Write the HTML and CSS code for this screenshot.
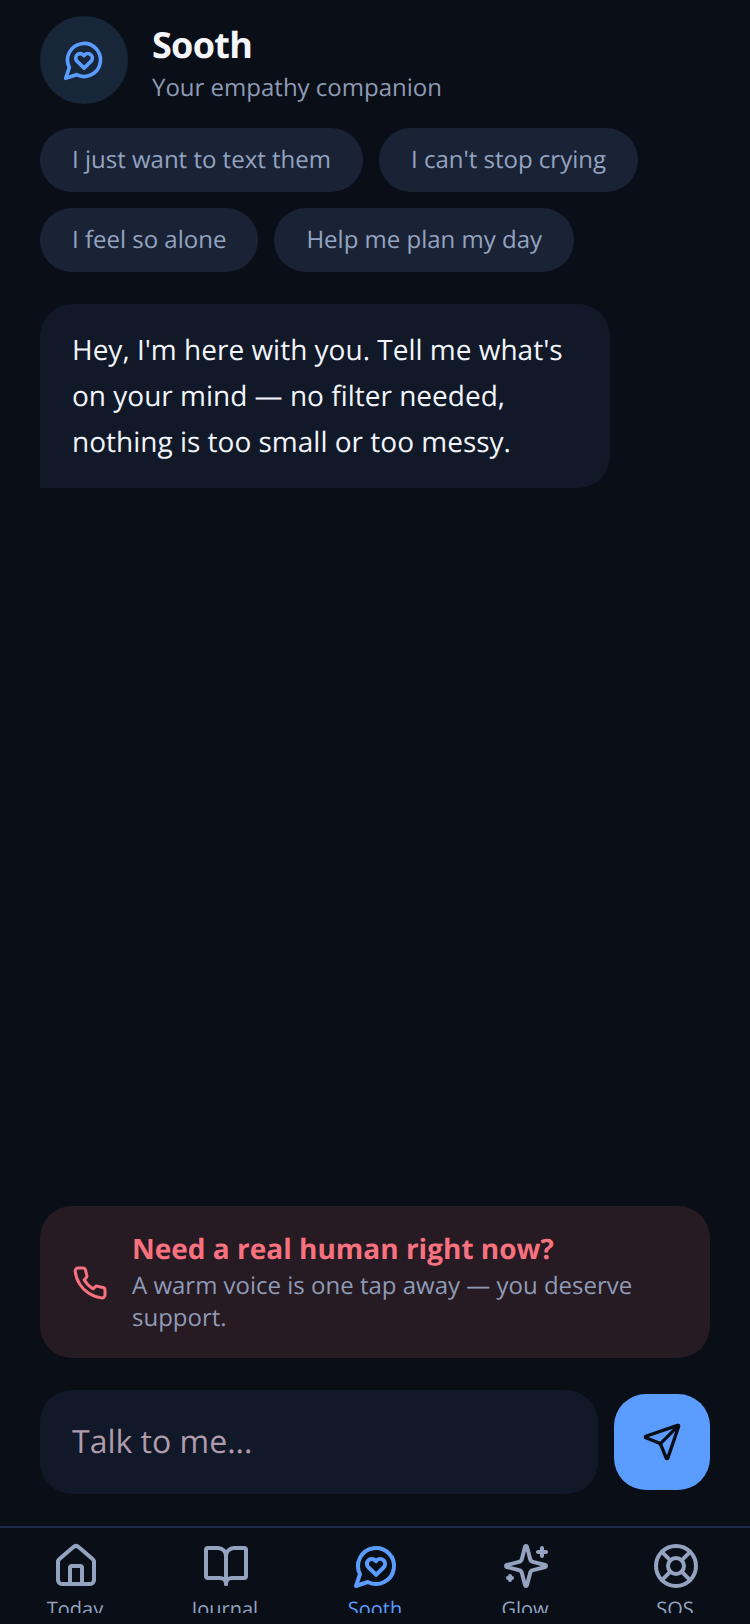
FILE: index.html
```html
<!DOCTYPE html>
<html>
<head>
    <meta charset="utf-8">
    <title>Sooth</title>
    <link rel="stylesheet" href="styles.css">
</head>
<body>
    <div class="screen">
        <header class="header">
            <div class="avatar">
                <svg class="icon icon-avatar" viewBox="0 0 24 24">
                    <path d="M7.9 20A9 9 0 1 0 4 16.1L2 22Z"/>
                    <path d="M15.8 9.2a2.5 2.5 0 0 0-3.5 0l-.3.4-.35-.3a2.42 2.42 0 1 0-3.2 3.6l3.6 3.5 3.6-3.5c1.2-1.2 1.1-2.7.2-3.7"/>
                </svg>
            </div>
            <div class="header-text">
                <h1>Sooth</h1>
                <p>Your empathy companion</p>
            </div>
        </header>

        <div class="chips">
            <span class="chip">I just want to text them</span>
            <span class="chip">I can't stop crying</span>
            <span class="chip">I feel so alone</span>
            <span class="chip">Help me plan my day</span>
        </div>

        <div class="messages">
            <div class="bubble">Hey, I'm here with you. Tell me what's on your mind — no filter needed, nothing is too small or too messy.</div>
        </div>

        <div class="help-card">
            <svg class="icon icon-phone" viewBox="0 0 24 24">
                <path d="M22 16.92v3a2 2 0 0 1-2.18 2 19.79 19.79 0 0 1-8.63-3.07 19.5 19.5 0 0 1-6-6 19.79 19.79 0 0 1-3.07-8.67A2 2 0 0 1 4.11 2h3a2 2 0 0 1 2 1.72 12.84 12.84 0 0 0 .7 2.81 2 2 0 0 1-.45 2.11L8.09 9.91a16 16 0 0 0 6 6l1.27-1.27a2 2 0 0 1 2.11-.45 12.84 12.84 0 0 0 2.81.7A2 2 0 0 1 22 16.92z"/>
            </svg>
            <div class="help-text">
                <h2>Need a real human right now?</h2>
                <p>A warm voice is one tap away — you deserve support.</p>
            </div>
        </div>

        <div class="composer">
            <div class="input">Talk to me...</div>
            <div class="send">
                <svg class="icon icon-send" viewBox="0 0 24 24">
                    <path d="M14.536 21.686a.5.5 0 0 0 .937-.024l6.5-19a.496.496 0 0 0-.635-.635l-19 6.5a.5.5 0 0 0-.024.937l7.93 3.18a2 2 0 0 1 1.112 1.11z"/>
                    <path d="m21.854 2.147-10.94 10.939"/>
                </svg>
            </div>
        </div>

        <nav class="nav">
            <div class="nav-item">
                <svg class="icon icon-nav" viewBox="0 0 24 24">
                    <path d="M15 21v-8a1 1 0 0 0-1-1h-4a1 1 0 0 0-1 1v8"/>
                    <path d="M3 10a2 2 0 0 1 .709-1.528l7-5.999a2 2 0 0 1 2.582 0l7 5.999A2 2 0 0 1 21 10v9a2 2 0 0 1-2 2H5a2 2 0 0 1-2-2z"/>
                </svg>
                <span>Today</span>
            </div>
            <div class="nav-item">
                <svg class="icon icon-nav" viewBox="0 0 24 24">
                    <path d="M12 7v14"/>
                    <path d="M3 18a1 1 0 0 1-1-1V4a1 1 0 0 1 1-1h5a4 4 0 0 1 4 4 4 4 0 0 1 4-4h5a1 1 0 0 1 1 1v13a1 1 0 0 1-1 1h-6a3 3 0 0 0-3 3 3 3 0 0 0-3-3z"/>
                </svg>
                <span>Journal</span>
            </div>
            <div class="nav-item active">
                <svg class="icon icon-nav" viewBox="0 0 24 24">
                    <path d="M7.9 20A9 9 0 1 0 4 16.1L2 22Z"/>
                    <path d="M15.8 9.2a2.5 2.5 0 0 0-3.5 0l-.3.4-.35-.3a2.42 2.42 0 1 0-3.2 3.6l3.6 3.5 3.6-3.5c1.2-1.2 1.1-2.7.2-3.7"/>
                </svg>
                <span>Sooth</span>
            </div>
            <div class="nav-item">
                <svg class="icon icon-nav" viewBox="0 0 24 24">
                    <path d="M9.937 15.5A2 2 0 0 0 8.5 14.063l-6.135-1.582a.5.5 0 0 1 0-.962L8.5 9.936A2 2 0 0 0 9.937 8.5l1.582-6.135a.5.5 0 0 1 .963 0L14.063 8.5A2 2 0 0 0 15.5 9.937l6.135 1.581a.5.5 0 0 1 0 .964L15.5 14.063a2 2 0 0 0-1.437 1.437l-1.582 6.135a.5.5 0 0 1-.963 0z"/>
                    <path d="M20 3v4"/>
                    <path d="M22 5h-4"/>
                    <path d="M4 17v2"/>
                    <path d="M5 18H3"/>
                </svg>
                <span>Glow</span>
            </div>
            <div class="nav-item">
                <svg class="icon icon-nav" viewBox="0 0 24 24">
                    <circle cx="12" cy="12" r="10"/>
                    <path d="m4.93 4.93 4.24 4.24"/>
                    <path d="m14.83 9.17 4.24-4.24"/>
                    <path d="m14.83 14.83 4.24 4.24"/>
                    <path d="m9.17 14.83-4.24 4.24"/>
                    <circle cx="12" cy="12" r="4"/>
                </svg>
                <span>SOS</span>
            </div>
        </nav>
    </div>
</body>
</html>
```

FILE: styles.css
```css
* {
    box-sizing: border-box;
}

html, body {
    margin: 0;
    background-color: #0A0E17;
}

body {
    font-family: "Open Sans", sans-serif;
    text-rendering: geometricPrecision;
}

h1, h2, p {
    margin: 0;
}

.screen {
    height: 1624px;
    display: flex;
    flex-direction: column;
    overflow: hidden;
}

.icon {
    fill: none;
    stroke: currentColor;
    stroke-width: 2;
    stroke-linecap: round;
    stroke-linejoin: round;
    flex-shrink: 0;
}

.header {
    display: flex;
    align-items: center;
    gap: 24px;
    height: 104px;
    padding: 16px 40px 0;
}

.avatar {
    width: 88px;
    height: 88px;
    border-radius: 50%;
    background-color: #18263A;
    color: #5B9DFF;
    display: flex;
    align-items: center;
    justify-content: center;
}

.icon-avatar {
    width: 44px;
    height: 44px;
}

.header-text {
    margin-top: 5px;
}

.header-text h1 {
    font-size: 36px;
    line-height: 50px;
    font-weight: 700;
    letter-spacing: -0.72px;
    color: #F4F6FB;
}

.header-text p {
    padding-top: 1px;
    font-size: 24px;
    line-height: 34px;
    color: #8F9BB5;
}

.chips {
    display: flex;
    flex-wrap: wrap;
    gap: 16px;
    padding: 24px 40px 0;
}

.chip {
    height: 64px;
    padding: 0 32px;
    border-radius: 32px;
    background-color: #1A2335;
    color: #94A3C0;
    font-size: 24px;
    line-height: 64px;
}

.messages {
    flex: 1;
    padding: 32px 40px 0;
}

.bubble {
    width: 570px;
    padding: 23px 32px;
    border-radius: 32px 32px 32px 0;
    background-color: #111827;
    color: #F1F4FA;
    font-size: 28px;
    line-height: 46px;
}

.help-card {
    display: flex;
    align-items: center;
    gap: 24px;
    margin: 0 40px;
    padding: 25px 32px 24px;
    border-radius: 32px;
    background-color: #261A23;
    color: #F8717F;
}

.icon-phone {
    width: 36px;
    height: 36px;
}

.help-text h2 {
    font-size: 28px;
    line-height: 36px;
    font-weight: 700;
    margin-bottom: 3px;
}

.help-text p {
    font-size: 24px;
    line-height: 32px;
    color: #8F9BB5;
}

.composer {
    display: flex;
    align-items: center;
    gap: 16px;
    padding: 32px 40px;
}

.input {
    flex: 1;
    height: 104px;
    padding: 0 32px;
    border-radius: 32px;
    background-color: #111827;
    color: #B09BAD;
    font-size: 32px;
    line-height: 104px;
}

.send {
    width: 96px;
    height: 96px;
    border-radius: 32px;
    background-color: #5B9DFF;
    color: #0A0E17;
    display: flex;
    align-items: center;
    justify-content: center;
}

.icon-send {
    width: 40px;
    height: 40px;
}

.nav {
    display: flex;
    height: 87px;
    margin-bottom: 11px;
    padding-top: 14px;
    border-top: 2px solid #1E2A4A;
    overflow: hidden;
}

.nav-item {
    flex: 1;
    display: flex;
    flex-direction: column;
    align-items: center;
    gap: 4px;
    color: #94A3C0;
}

.nav-item span {
    font-size: 20px;
    line-height: 30px;
}

.nav-item.active {
    color: #5B9DFF;
}

.icon-nav {
    width: 48px;
    height: 48px;
    margin-left: 2px;
}
```
